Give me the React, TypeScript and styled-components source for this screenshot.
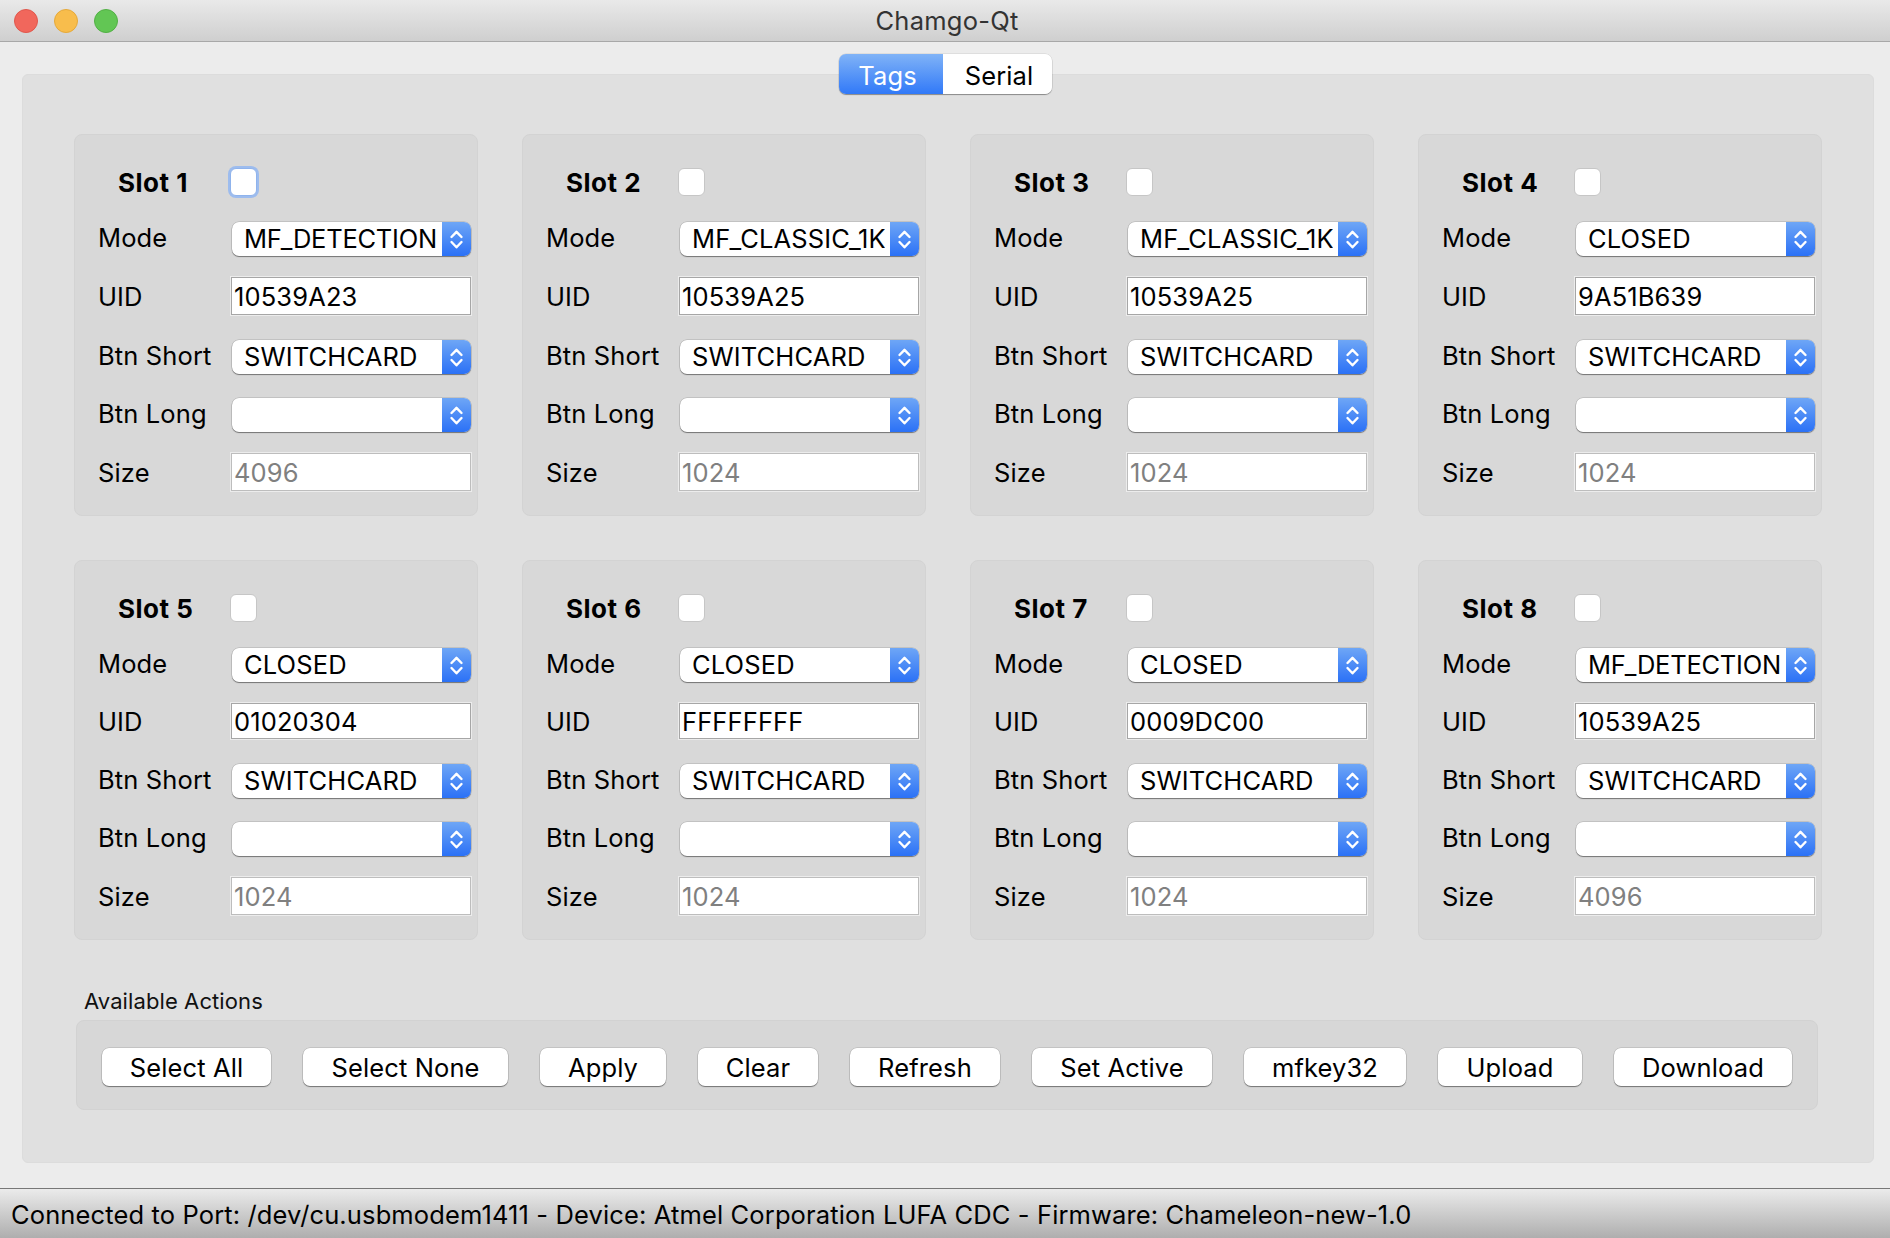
import React from "react";
import styled, { createGlobalStyle } from "styled-components";

const Global = createGlobalStyle`
  html, body { margin: 0; padding: 0; background: #ececec; }
  * { box-sizing: border-box; }
  body { font-family: Inter, "Liberation Sans", sans-serif; color: #000; }
`;

const Page = styled.div`
  width: 1890px;
  height: 1238px;
  display: flex;
  flex-direction: column;
  overflow: hidden;
  background: #ececec;
`;

const TitleBar = styled.header`
  height: 42px;
  flex: none;
  display: grid;
  grid-template-columns: 1fr auto 1fr;
  align-items: center;
  padding: 0 10px 0 14px;
  background: linear-gradient(#e9e9e9, #cfcfcf);
  border-bottom: 1px solid #a8a8a8;
`;

const Lights = styled.div`
  display: flex;
  gap: 16px;
`;

const Light = styled.span<{ $fill: string; $edge: string }>`
  width: 24px;
  height: 24px;
  border-radius: 50%;
  background: ${(p) => p.$fill};
  border: 1px solid ${(p) => p.$edge};
`;

const Title = styled.div`
  font-size: 25.5px;
  letter-spacing: 0.25px;
  color: #333;
`;

const Main = styled.main`
  flex: 1;
  padding: 12px 16px 25px 22px;
  display: flex;
  flex-direction: column;
`;

const Tabs = styled.div`
  align-self: center;
  display: flex;
  height: 40px;
  margin: 0 0 -20px -6px;
  z-index: 1;
  border-radius: 7px;
  box-shadow: 0 1px 1px rgba(0, 0, 0, 0.35), 0 0 0 0.5px rgba(0, 0, 0, 0.12);
  overflow: hidden;
`;

const Tab = styled.div<{ $active?: boolean; $width: number }>`
  width: ${(p) => p.$width}px;
  display: flex;
  align-items: center;
  justify-content: center;
  padding: 3px ${(p) => (p.$active ? 6 : 0)}px 0 ${(p) => (p.$active ? 0 : 4)}px;
  font-size: 25.5px;
  letter-spacing: 0.13px;
  color: ${(p) => (p.$active ? "#fff" : "#000")};
  background: ${(p) => (p.$active ? "linear-gradient(#80b3f7, #3179f8)" : "#fff")};
`;

const Panel = styled.section`
  flex: 1;
  background: #e0e0e0;
  border: 1px solid #dcdcdc;
  border-radius: 6px;
  padding: 59px 51px 0;
`;

const SlotGrid = styled.div`
  display: grid;
  grid-template-columns: repeat(4, 404px);
  column-gap: 44px;
  row-gap: 44px;
`;

const SlotCard = styled.div`
  display: flex;
  flex-direction: column;
  background: #d8d8d8;
  border: 1px solid #d3d3d3;
  border-radius: 8px;
  padding: 33px 6px 24px 23px;
`;

const Row = styled.div<{ $gap: number }>`
  display: grid;
  grid-template-columns: 133px 240px;
  align-items: center;
  margin-top: ${(p) => p.$gap}px;
`;

const HeaderRow = styled.div`
  display: grid;
  grid-template-columns: 133px 240px;
  align-items: start;
  height: 28px;
`;

const SlotTitle = styled.div`
  font-size: 26px;
  font-weight: 700;
  letter-spacing: 0.5px;
  line-height: 29px;
  padding-left: 20px;
`;

const Check = styled.span<{ $focus?: boolean }>`
  width: 27px;
  height: 28px;
  margin-left: -1px;
  background: #fff;
  border: 1px solid ${(p) => (p.$focus ? "#8fb3ec" : "#c6c6c6")};
  border-radius: 6px;
  box-shadow: ${(p) => (p.$focus ? "0 0 0 2px #9dbcee" : "none")};
`;

const Label = styled.div<{ $shift?: number }>`
  font-size: 25.5px;
  letter-spacing: 0.13px;
  line-height: 34px;
  white-space: nowrap;
  transform: translateY(${(p) => p.$shift ?? 0}px);
`;

const Combo = styled.div`
  height: 34px;
  margin-left: 1px;
  display: flex;
  background: #fff;
  border-radius: 7px;
  box-shadow: 0 1px 1px rgba(0, 0, 0, 0.4), 0 0 0 0.5px rgba(0, 0, 0, 0.2);
  overflow: hidden;
`;

const ComboText = styled.div<{ $tight?: boolean }>`
  flex: 1;
  min-width: 0;
  margin: 0 5px 0 12px;
  font-size: 25.5px;
  letter-spacing: ${(p) => (p.$tight ? "-0.25px" : "0.13px")};
  line-height: 34px;
  white-space: nowrap;
  overflow: hidden;
`;

const ComboArrow = styled.div`
  width: 29px;
  flex: none;
  display: flex;
  align-items: center;
  justify-content: center;
  background: linear-gradient(#6ea6f6, #2b71f6);
`;

const Field = styled.div<{ $disabled?: boolean; $height: number }>`
  height: ${(p) => p.$height}px;
  padding: 1px 0 0 2px;
  display: flex;
  align-items: center;
  background: #fff;
  border: 1px solid ${(p) => (p.$disabled ? "#bdbdbd" : "#a6a6a6")};
  box-shadow: 0 0 0 1px #ececec;
  font-size: 25.5px;
  letter-spacing: 0.13px;
  color: ${(p) => (p.$disabled ? "#808080" : "#000")};
`;

const GroupLabel = styled.div`
  margin: 48px 0 0 10px;
  height: 32px;
  font-size: 22px;
  letter-spacing: 0.1px;
  line-height: 26px;
  color: #111;
`;

const ActionGroup = styled.div`
  display: flex;
  gap: 32px;
  height: 90px;
  margin: 0 4px 0 2px;
  padding: 27px 25px 0;
  align-items: flex-start;
  background: #d7d7d7;
  border: 1px solid #d2d2d2;
  border-radius: 8px;
`;

const ActionButton = styled.div<{ $width: number }>`
  width: ${(p) => p.$width}px;
  height: 38px;
  flex: none;
  display: flex;
  align-items: center;
  justify-content: center;
  background: #fff;
  border-radius: 7px;
  box-shadow: 0 1px 1px rgba(0, 0, 0, 0.4), 0 0 0 0.5px rgba(0, 0, 0, 0.18);
  font-size: 25.5px;
  letter-spacing: 0.13px;
`;

const StatusBar = styled.footer`
  height: 50px;
  flex: none;
  display: flex;
  align-items: center;
  padding: 2px 0 0 11px;
  background: linear-gradient(#ebebeb, #aeaeae);
  border-top: 1px solid #777;
  font-size: 25.5px;
  letter-spacing: 0.13px;
  white-space: nowrap;
`;

const Arrows = () => (
  <svg width="29" height="34" viewBox="0 0 29 34" fill="none" stroke="#fff" strokeWidth="2.4" strokeLinecap="round" strokeLinejoin="round" aria-hidden="true">
    <polyline points="9.5,15 14.5,9.8 19.5,15" />
    <polyline points="9.5,20 14.5,25.3 19.5,20" />
  </svg>
);

const Select = ({ value }: { value: string }) => (
  <Combo>
    <ComboText $tight={value === "MF_DETECTION"}>{value}</ComboText>
    <ComboArrow>
      <Arrows />
    </ComboArrow>
  </Combo>
);

type SlotData = { n: number; mode: string; uid: string; size: string; focus?: boolean };

const slots: SlotData[] = [
  { n: 1, mode: "MF_DETECTION", uid: "10539A23", size: "4096", focus: true },
  { n: 2, mode: "MF_CLASSIC_1K", uid: "10539A25", size: "1024" },
  { n: 3, mode: "MF_CLASSIC_1K", uid: "10539A25", size: "1024" },
  { n: 4, mode: "CLOSED", uid: "9A51B639", size: "1024" },
  { n: 5, mode: "CLOSED", uid: "01020304", size: "1024" },
  { n: 6, mode: "CLOSED", uid: "FFFFFFFF", size: "1024" },
  { n: 7, mode: "CLOSED", uid: "0009DC00", size: "1024" },
  { n: 8, mode: "MF_DETECTION", uid: "10539A25", size: "4096" },
];

const actions: [string, number][] = [
  ["Select All", 169],
  ["Select None", 205],
  ["Apply", 126],
  ["Clear", 120],
  ["Refresh", 150],
  ["Set Active", 180],
  ["mfkey32", 162],
  ["Upload", 144],
  ["Download", 178],
];

const Slot = ({ data }: { data: SlotData }) => {
  const uidHeight = data.n <= 4 ? 38 : 36;
  return (
    <SlotCard>
      <HeaderRow>
        <SlotTitle>Slot {data.n}</SlotTitle>
        <Check $focus={data.focus} />
      </HeaderRow>
      <Row $gap={26}>
        <Label $shift={-1}>Mode</Label>
        <Select value={data.mode} />
      </Row>
      <Row $gap={21}>
        <Label $shift={1}>UID</Label>
        <Field $height={uidHeight}>{data.uid}</Field>
      </Row>
      <Row $gap={25}>
        <Label $shift={-1}>Btn Short</Label>
        <Select value="SWITCHCARD" />
      </Row>
      <Row $gap={24}>
        <Label $shift={-1}>Btn Long</Label>
        <Select value="" />
      </Row>
      <Row $gap={21}>
        <Label $shift={1}>Size</Label>
        <Field $height={38} $disabled>
          {data.size}
        </Field>
      </Row>
    </SlotCard>
  );
};

export default function App() {
  return (
    <Page>
      <Global />
      <TitleBar>
        <Lights>
          <Light $fill="#f1675c" $edge="#e0574c" />
          <Light $fill="#f8bd4c" $edge="#e5a93a" />
          <Light $fill="#62c654" $edge="#52b045" />
        </Lights>
        <Title>Chamgo-Qt</Title>
        <span />
      </TitleBar>
      <Main>
        <Tabs>
          <Tab $active $width={104}>
            Tags
          </Tab>
          <Tab $width={109}>Serial</Tab>
        </Tabs>
        <Panel>
          <SlotGrid>
            {slots.map((s) => (
              <Slot key={s.n} data={s} />
            ))}
          </SlotGrid>
          <GroupLabel>Available Actions</GroupLabel>
          <ActionGroup>
            {actions.map(([label, width]) => (
              <ActionButton key={label} $width={width}>
                {label}
              </ActionButton>
            ))}
          </ActionGroup>
        </Panel>
      </Main>
      <StatusBar>
        Connected to Port: /dev/cu.usbmodem1411 - Device: Atmel Corporation LUFA CDC - Firmware: Chameleon-new-1.0
      </StatusBar>
    </Page>
  );
}
